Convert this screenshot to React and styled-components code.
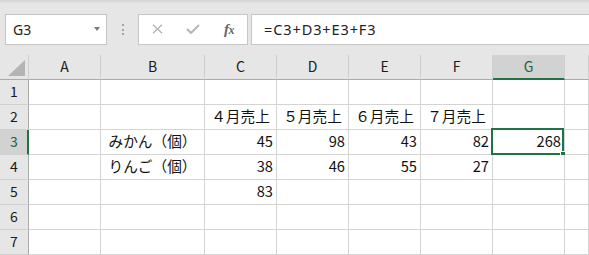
import React from "react";
import styled, { createGlobalStyle } from "styled-components";

const GlobalStyle = createGlobalStyle`
  html, body { margin: 0; padding: 0; background: #ffffff; overflow: hidden; }
  body { font-family: "Noto Sans", "Noto Sans CJK JP", sans-serif; }
  * { box-sizing: border-box; }
`;

const GREEN = "#217346";

const Page = styled.div`
  width: 589px;
  height: 255px;
  display: flex;
  flex-direction: column;
  background: #fff;
`;

const Toolbar = styled.div`
  height: 55px;
  flex: none;
  display: flex;
  align-items: stretch;
  padding: 14px 0 10px 5px;
  background: linear-gradient(#d2d2d2 0px, #dedede 2px, #e6e6e6 4px, #e6e6e6 100%);
`;

const NameBox = styled.div`
  width: 102px;
  display: flex;
  align-items: center;
  justify-content: space-between;
  padding: 0 6px 1px 7px;
  background: #fff;
  border: 1px solid #c6c6c6;
  font-family: "Noto Sans", sans-serif;
  font-size: 14px;
  color: #222;
`;

const Caret = styled.span`
  width: 0;
  height: 0;
  border-left: 3.5px solid transparent;
  border-right: 3.5px solid transparent;
  border-top: 4px solid #7a7a7a;
  margin-top: -1px;
`;

const Grip = styled.div`
  width: 31px;
  display: flex;
  flex-direction: column;
  align-items: center;
  justify-content: center;
  gap: 2.5px;
`;

const Dot = styled.span`
  width: 2px;
  height: 2px;
  background: #a3a3a3;
`;

const FxButtons = styled.div`
  width: 110px;
  display: grid;
  grid-template-columns: repeat(3, 36px);
  background: #fff;
  border: 1px solid #c6c6c6;
`;

const IconSlot = styled.div`
  display: flex;
  align-items: center;
  justify-content: center;
  padding-bottom: 1px;
`;

const FxLabel = styled.span`
  font-family: "Liberation Serif", "DejaVu Serif", serif;
  font-style: italic;
  font-weight: bold;
  font-size: 15px;
  color: #666;
  letter-spacing: -0.5px;
  & small {
    font-size: 12px;
  }
`;

const FormulaInput = styled.div`
  flex: 1;
  margin-left: 3px;
  display: flex;
  align-items: center;
  padding: 0 0 1px 12px;
  background: #fff;
  border: 1px solid #c6c6c6;
  border-right: none;
  font-family: "Noto Sans", sans-serif;
  font-size: 14.5px;
  letter-spacing: 0.9px;
  color: #222;
`;

const Sheet = styled.div`
  flex: 1;
  display: grid;
  grid-template-columns: 29px 72px 104px repeat(5, 72px) 1fr;
  grid-auto-rows: 25px;
  font-family: "Noto Sans CJK JP", "Noto Sans", sans-serif;
`;

const Corner = styled.div`
  position: relative;
  background: #e6e6e6;
  border-right: 1px solid #cfcfcf;
  border-bottom: 1px solid #ababab;
  display: flex;
  align-items: flex-end;
  justify-content: flex-end;
  padding: 0 3px 3px 0;
`;

const Triangle = styled.span`
  width: 0;
  height: 0;
  border-left: 17px solid transparent;
  border-bottom: 16px solid #b4b4b4;
`;

const ColHead = styled.div`
  background: ${(p) => (p.$active ? "#d2d2d2" : "#e6e6e6")};
  border-right: 1px solid #cfcfcf;
  border-bottom: ${(p) => (p.$active ? `2px solid ${GREEN}` : "1px solid #ababab")};
  display: flex;
  align-items: center;
  justify-content: center;
  padding-bottom: ${(p) => (p.$active ? "2px" : "3px")};
  font-size: 14px;
  color: ${(p) => (p.$active ? "#1d5e3a" : "#1a1a1a")};
`;

const RowHead = styled.div`
  background: ${(p) => (p.$active ? "#d2d2d2" : "#e6e6e6")};
  border-right: ${(p) => (p.$active ? `2px solid ${GREEN}` : "1px solid #ababab")};
  border-bottom: 1px solid #d0d0d0;
  display: flex;
  align-items: center;
  justify-content: center;
  padding-bottom: 2px;
  padding-left: ${(p) => (p.$active ? "1px" : "0")};
  font-size: 14px;
  color: ${(p) => (p.$active ? "#1d5e3a" : "#1a1a1a")};
`;

const Cell = styled.div`
  position: relative;
  background: #fff;
  border-right: 1px solid #d4d4d4;
  border-bottom: 1px solid #d4d4d4;
  display: flex;
  align-items: center;
  justify-content: ${(p) =>
    p.$align === "right" ? "flex-end" : p.$align === "center" ? "center" : "flex-start"};
  padding: 0 3px 3px 3px;
  font-size: 14.67px;
  color: #111;
  white-space: nowrap;
`;

const Selection = styled.div`
  position: absolute;
  top: -2px;
  left: -2px;
  right: 0;
  bottom: -1px;
  border: 2px solid ${GREEN};
  pointer-events: none;
`;

const FillHandle = styled.div`
  position: absolute;
  right: -4px;
  bottom: -4px;
  width: 6px;
  height: 6px;
  background: ${GREEN};
  border-left: 1px solid #fff;
  border-top: 1px solid #fff;
`;

const columns = ["A", "B", "C", "D", "E", "F", "G", ""];

const data = {
  2: { C: "４月売上", D: "５月売上", E: "６月売上", F: "７月売上" },
  3: { B: "みかん（個）", C: "45", D: "98", E: "43", F: "82", G: "268" },
  4: { B: "りんご（個）", C: "38", D: "46", E: "55", F: "27" },
  5: { C: "83" },
};

const alignFor = (row, col) => {
  if (col === "B") return "center";
  if (row === 2) return "center";
  return "right";
};

const CrossIcon = () => (
  <svg width="11" height="10" viewBox="0 0 11 10">
    <path d="M1 0.8 L10 9.2 M10 0.8 L1 9.2" stroke="#b5b5b5" strokeWidth="1.4" fill="none" />
  </svg>
);

const CheckIcon = () => (
  <svg width="14" height="10" viewBox="0 0 14 10">
    <path d="M1 5 L5 9 L13 1" stroke="#b5b5b5" strokeWidth="2" fill="none" />
  </svg>
);

export default function App() {
  const rows = [1, 2, 3, 4, 5, 6, 7];
  return (
    <>
      <GlobalStyle />
      <Page>
        <Toolbar>
          <NameBox>
            <span>G3</span>
            <Caret />
          </NameBox>
          <Grip>
            <Dot />
            <Dot />
            <Dot />
          </Grip>
          <FxButtons>
            <IconSlot>
              <CrossIcon />
            </IconSlot>
            <IconSlot>
              <CheckIcon />
            </IconSlot>
            <IconSlot>
              <FxLabel>
                f<small>x</small>
              </FxLabel>
            </IconSlot>
          </FxButtons>
          <FormulaInput>=C3+D3+E3+F3</FormulaInput>
        </Toolbar>
        <Sheet>
          <Corner>
            <Triangle />
          </Corner>
          {columns.map((c, i) => (
            <ColHead key={"h" + i} $active={c === "G"}>
              {c}
            </ColHead>
          ))}
          {rows.map((r) => (
            <React.Fragment key={r}>
              <RowHead $active={r === 3}>{r}</RowHead>
              {columns.map((c, i) => {
                const v = (data[r] && data[r][c]) || "";
                const selected = r === 3 && c === "G";
                return (
                  <Cell key={r + "-" + i} $align={alignFor(r, c)}>
                    {v}
                    {selected && (
                      <Selection>
                        <FillHandle />
                      </Selection>
                    )}
                  </Cell>
                );
              })}
            </React.Fragment>
          ))}
        </Sheet>
      </Page>
    </>
  );
}
